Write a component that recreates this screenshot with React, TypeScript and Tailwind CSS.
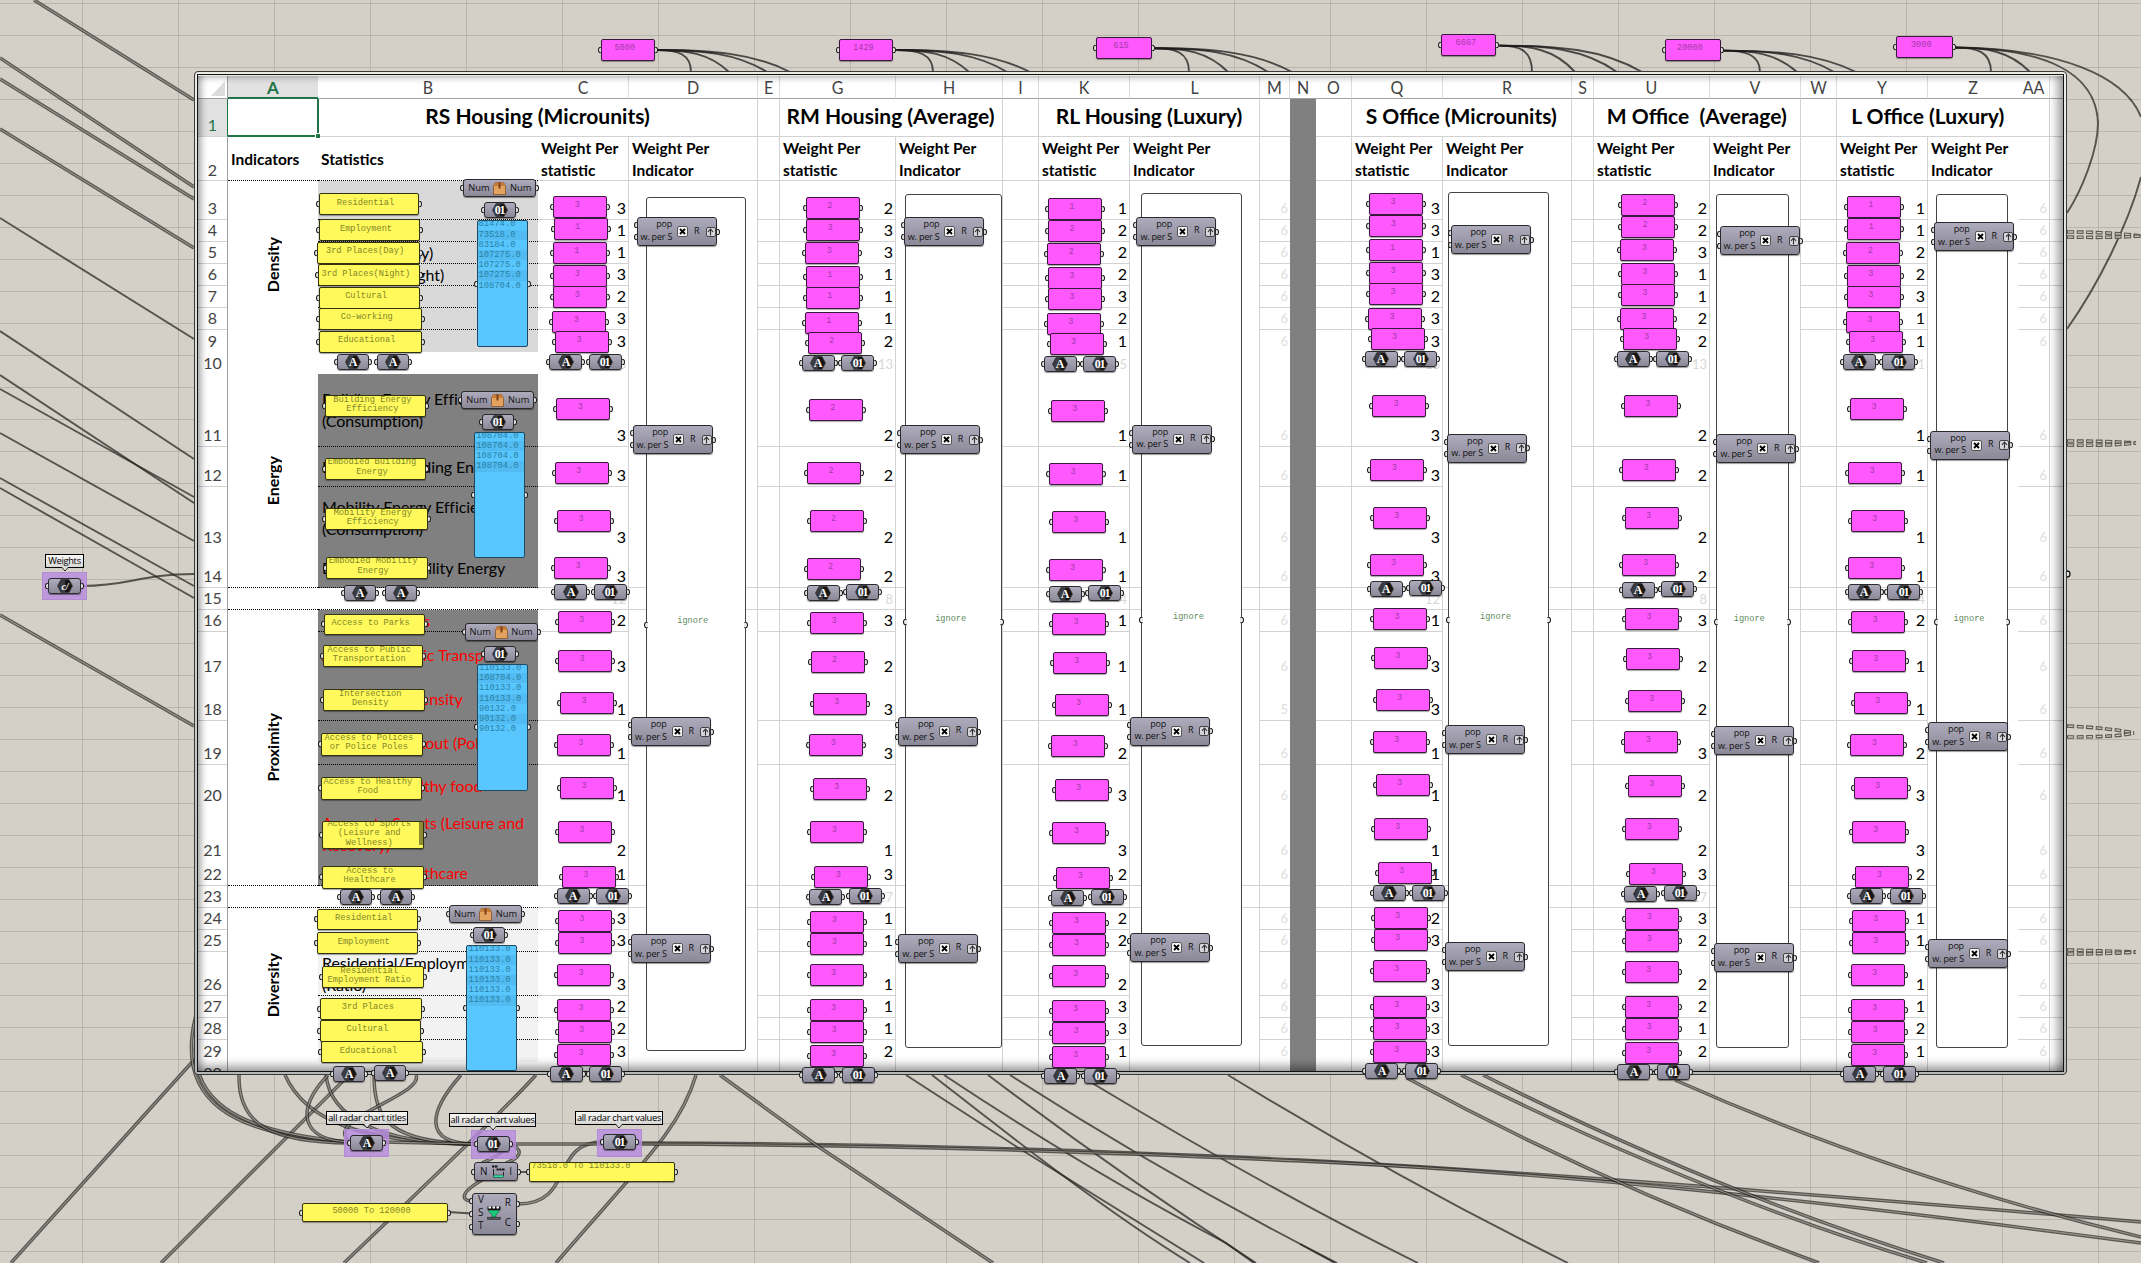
import React from "react";

type Pt = [number, number];

/* ---------- spreadsheet model ---------- */

type Line = "none" | "narrow" | "wide";
type Row = { n: number; h: string; line: Line };

const ROWS: Row[] = [
  { n: 3, h: "h-[39px]", line: "narrow" },
  { n: 4, h: "h-[22px]", line: "narrow" },
  { n: 5, h: "h-[22px]", line: "narrow" },
  { n: 6, h: "h-[22px]", line: "narrow" },
  { n: 7, h: "h-[22px]", line: "narrow" },
  { n: 8, h: "h-[22px]", line: "narrow" },
  { n: 9, h: "h-[22px]", line: "none" },
  { n: 10, h: "h-[22px]", line: "none" },
  { n: 11, h: "h-[73px]", line: "narrow" },
  { n: 12, h: "h-[40px]", line: "narrow" },
  { n: 13, h: "h-[61px]", line: "none" },
  { n: 14, h: "h-[40px]", line: "wide" },
  { n: 15, h: "h-[22px]", line: "wide" },
  { n: 16, h: "h-[22px]", line: "narrow" },
  { n: 17, h: "h-[45px]", line: "none" },
  { n: 18, h: "h-[44px]", line: "narrow" },
  { n: 19, h: "h-[44px]", line: "narrow" },
  { n: 20, h: "h-[41px]", line: "none" },
  { n: 21, h: "h-[55px]", line: "none" },
  { n: 22, h: "h-[25px]", line: "wide" },
  { n: 23, h: "h-[22px]", line: "wide" },
  { n: 24, h: "h-[22px]", line: "narrow" },
  { n: 25, h: "h-[22px]", line: "narrow" },
  { n: 26, h: "h-[44px]", line: "narrow" },
  { n: 27, h: "h-[22px]", line: "narrow" },
  { n: 28, h: "h-[22px]", line: "narrow" },
  { n: 29, h: "h-[22px]", line: "none" },
  { n: 30, h: "h-[10px]", line: "none" },
];

/* Values for sheet rows 3 to 30, one character per row; a dot is an empty cell. */
type Col = {
  k: string;
  w: string;
  vals?: string;
  sums?: Record<number, string>;
  wideOnly?: boolean;
  faint?: boolean;
  edge?: boolean;
  dark?: boolean;
};

const COLS: Col[] = [
  { k: "C", w: "w-[91px]", vals: "3113233.3333.2311121.333223.", sums: { 10: "16", 15: "12" }, edge: true },
  { k: "D", w: "w-[129px]", wideOnly: true, edge: true },
  { k: "E", w: "w-[22px]", edge: true },
  { k: "G", w: "w-[116px]", vals: "2331112.2222.3233213.111112.", sums: { 10: "13", 15: "8", 23: "17" }, edge: true },
  { k: "H", w: "w-[107px]", wideOnly: true, edge: true },
  { k: "I", w: "w-[36px]", edge: true },
  { k: "K", w: "w-[91px]", vals: "1222321.1111.1112332.222331.", sums: { 10: "15", 15: "4" }, edge: true },
  { k: "L", w: "w-[130px]", wideOnly: true, edge: true },
  { k: "M", w: "w-[30px]", vals: "6666666.6666.6656666.666666.", faint: true },
  { k: "N", w: "w-[26px]", dark: true },
  { k: "O", w: "w-[36px]", edge: true },
  { k: "Q", w: "w-[91px]", vals: "3313233.3333.1331111.233333.", sums: { 10: "16", 15: "12" }, edge: true },
  { k: "R", w: "w-[129px]", wideOnly: true, edge: true },
  { k: "S", w: "w-[22px]", edge: true },
  { k: "U", w: "w-[116px]", vals: "2231122.2222.3223223.322212.", sums: { 10: "13", 15: "8", 23: "17" }, edge: true },
  { k: "V", w: "w-[91px]", wideOnly: true, edge: true },
  { k: "W", w: "w-[36px]", edge: true },
  { k: "Y", w: "w-[91px]", vals: "1122311.1111.2112332.111121.", sums: { 10: "11", 15: "4" }, edge: true },
  { k: "Z", w: "w-[90px]", wideOnly: true },
  { k: "AA", w: "w-[32px]", vals: "6666666.6666.6666666.666666.", faint: true, edge: true },
  { k: "", w: "w-[13px]" },
];

const B_TEXT: Record<number, { t: string[]; red?: boolean }> = {
  5: { t: ["3rd Places (Day)"] },
  6: { t: ["3rd Places (Night)"] },
  11: { t: ["Building Energy Efficiency", "(Consumption)"] },
  12: { t: ["Embodied Building Energy"] },
  13: { t: ["Mobility Energy Efficiency", "(Consumption)"] },
  14: { t: ["Embodied Mobility Energy"] },
  16: { t: ["Access to Parks"], red: true },
  17: { t: ["Access to Public Transport"], red: true },
  18: { t: ["Intersection Density"], red: true },
  19: { t: ["Access to Lookout (Police)"], red: true },
  20: { t: ["Access to Healthy food"], red: true },
  21: { t: ["Access to Sports (Leisure and", "Recovery)"], red: true },
  22: { t: ["Access to Healthcare"], red: true },
  26: { t: ["Residential/Employment", "(Ratio)"] },
};

function bFill(n: number) {
  if (n <= 9) return "bg-[#d9d9d9]";
  if (n >= 11 && n <= 14) return "bg-[#808080]";
  if (n >= 16 && n <= 22) return "bg-[#808080]";
  if (n >= 24 && n <= 29) return "bg-[#f2f2f2]";
  return "bg-white";
}

const LINE = "border-[#d2d2d2]";

function HeadLetter({ w, t, edge }: { w: string; t: string; edge?: boolean }) {
  return (
    <div className={`${w} shrink-0 flex items-center justify-center pt-[2px] text-[16px] text-[#444] border-b border-[#a0a0a0] ${edge ? "border-r border-r-[#dcdcdc]" : ""}`}>
      <span className="scale-y-[1.08]">{t}</span>
    </div>
  );
}

function Title({ w, t, edge = true }: { w: string; t: string; edge?: boolean }) {
  return (
    <div className={`${w} shrink-0 flex items-center justify-center border-b ${edge ? "border-r" : ""} ${LINE} pb-[3px] text-[20.5px] font-bold text-black whitespace-pre`}>
      <span className="scale-x-[1.025]">{t}</span>
    </div>
  );
}

function Gap({ w, edge = true }: { w: string; edge?: boolean }) {
  return <div className={`${w} shrink-0 border-b ${edge ? "border-r" : ""} ${LINE}`} />;
}

function Sheet() {
  return (
    <div className="relative flex h-[996px] w-[1865px] flex-col overflow-hidden bg-white font-['Lato',sans-serif]">
      <div className="flex h-[23px] shrink-0">
        <div className="flex w-[30px] shrink-0 items-end justify-end border-b border-r border-[#a0a0a0] pb-[2px] pr-[2px]">
          <svg width="14" height="15" viewBox="0 0 14 15"><path d="M14 0V15H0Z" fill="#dcdcdc" /></svg>
        </div>
        <div className="flex w-[90px] shrink-0 items-center justify-center border-b-2 border-[#217346] bg-[#e1e1e1] pt-[2px] text-[17px] font-bold text-[#217346]">A</div>
        <HeadLetter w="w-[220px]" t="B" />
        {COLS.map((c) => (
          <HeadLetter key={c.k} w={c.w} t={c.k} edge={c.edge || c.k === "M"} />
        ))}
      </div>

      <div className="flex h-[38px] shrink-0">
        <div className="flex w-[30px] shrink-0 items-end justify-center border-b border-r border-b-[#d2d2d2] border-r-[#217346] bg-[#e1e1e1] pb-px text-[16px] leading-[20px] text-[#217346]">1</div>
        <div className="relative w-[91px] shrink-0 border-2 border-l-0 border-t-0 border-[#217346]">
          <div className="absolute -bottom-[3px] -right-[3px] size-[5px] border-l border-t border-white bg-[#217346]" />
        </div>
        <Title w="w-[439px]" t="RS Housing (Microunits)" />
        <Gap w="w-[22px]" />
        <Title w="w-[223px]" t="RM Housing (Average)" />
        <Gap w="w-[36px]" />
        <Title w="w-[221px]" t="RL Housing (Luxury)" />
        <Gap w="w-[30px]" edge={false} />
        <div className="w-[26px] shrink-0 bg-[#808080]" />
        <Gap w="w-[36px]" />
        <Title w="w-[220px]" t="S Office (Microunits)" />
        <Gap w="w-[22px]" />
        <Title w="w-[207px]" t="M Office  (Average)" />
        <Gap w="w-[36px]" />
        <Title w="w-[181px]" t="L Office (Luxury)" edge={false} />
        <Gap w="w-[32px]" />
        <Gap w="w-[13px]" edge={false} />
      </div>

      <div className="flex h-[44px] shrink-0 text-[15.5px] font-bold leading-[22px] text-black">
        <div className="flex w-[30px] shrink-0 items-end justify-center border-b border-r border-b-[#d2d2d2] border-r-[#a0a0a0] text-[16px] font-normal leading-[20px] text-[#444]">2</div>
        <div className="flex w-[90px] shrink-0 items-center border-b border-dotted border-black pl-[3px]">Indicators</div>
        <div className="flex w-[220px] shrink-0 items-center border-b border-dotted border-black pl-[3px]">Statistics</div>
        {COLS.map((c) =>
          c.dark ? (
            <div key={c.k} className={`${c.w} shrink-0 bg-[#808080]`} />
          ) : (
            <div key={c.k} className={`${c.w} shrink-0 border-b ${c.edge ? "border-r" : ""} ${LINE} whitespace-nowrap pl-[3px]`}>
              {c.vals && !c.faint && (<>Weight Per<br />statistic</>)}
              {c.wideOnly && (<>Weight Per<br />Indicator</>)}
            </div>
          ),
        )}
      </div>

      <div className="flex grow">
        <div className="flex w-[30px] shrink-0 flex-col border-r border-[#a0a0a0] text-[16px] leading-[22px] text-[#444]">
          {ROWS.map((r) => (
            <div key={r.n} className={`${r.h} flex shrink-0 justify-center ${r.n === 30 ? "items-start" : "items-end"} ${r.line === "none" ? "" : "border-b border-[#d2d2d2]"}`}>{r.n}</div>
          ))}
        </div>

        <div className="flex w-[90px] shrink-0 flex-col text-[16px] font-bold">
          {[
            { t: "Density", h: "h-[193px]", p: "pb-[26px]", l: "" },
            { t: "Energy", h: "h-[214px]", p: "pb-0", l: "border-b border-dotted border-black" },
            { t: "", h: "h-[22px]", p: "", l: "border-b border-dotted border-black" },
            { t: "Proximity", h: "h-[276px]", p: "", l: "border-b border-dotted border-black" },
            { t: "", h: "h-[22px]", p: "", l: "border-b border-dotted border-black" },
            { t: "Diversity", h: "h-[154px]", p: "", l: "" },
          ].map((s, i) => (
            <div key={i} className={`${s.h} ${s.p} ${s.l} flex shrink-0 items-center justify-center`}>
              <span className="rotate-180 [writing-mode:vertical-rl]">{s.t}</span>
            </div>
          ))}
        </div>

        <div className="flex w-[220px] shrink-0 flex-col text-[16px] leading-[22px] tracking-[-0.07px]">
          {ROWS.map((r) => {
            const b = B_TEXT[r.n];
            return (
              <div key={r.n} className={`${r.h} ${bFill(r.n)} ${r.line === "none" ? "" : "border-b border-dotted border-black"} flex shrink-0 flex-col justify-center overflow-hidden whitespace-nowrap pl-[4px] ${b && b.red ? "text-[#ff0000]" : "text-black"}`}>
                {b && b.t.map((t) => <div key={t}>{t}</div>)}
              </div>
            );
          })}
        </div>

        {COLS.map((c) => (
          <div key={c.k} className={`${c.w} flex shrink-0 flex-col ${c.dark ? "bg-[#808080]" : ""} ${c.edge ? "border-r " + LINE : ""}`}>
            {!c.dark &&
              ROWS.map((r, i) => {
                const v = c.vals ? c.vals[i] : ".";
                const sum = c.sums && c.sums[r.n];
                const lined = r.line === "wide" || (r.line === "narrow" && !c.wideOnly);
                return (
                  <div key={r.n} className={`${r.h} flex shrink-0 items-end justify-end pr-[2px] leading-[22px] ${lined ? "border-b " + LINE : ""} ${c.faint ? "text-[13px] text-[#dedede]" : "text-[16px] text-black"}`}>
                    {v !== "." && v}
                    {sum && <span className="text-[13px] leading-[19px] text-[#d8d8d8]">{sum}</span>}
                  </div>
                );
              })}
          </div>
        ))}
      </div>

      <div className="pointer-events-none absolute inset-0 shadow-[inset_0_-14px_10px_-8px_rgba(0,0,0,0.4),inset_-12px_0_8px_-6px_rgba(0,0,0,0.35),inset_8px_0_7px_-5px_rgba(0,0,0,0.35),inset_0_6px_6px_-4px_rgba(0,0,0,0.25)]" />
    </div>
  );
}

/* ---------- canvas nodes ---------- */

function Port({ side, y }: { side: "l" | "r"; y?: number }) {
  return (
    <span
      className={`absolute h-[7px] w-[4px] -translate-y-1/2 border-[1.3px] border-[#151515] bg-[#e8e8e8] ${
        side === "l" ? "-left-[3px] rounded-l-full border-r-0" : "-right-[3px] rounded-r-full border-l-0"
      }`}
      style={{ top: y === undefined ? "50%" : y }}
    />
  );
}

const MONO = "font-['Liberation_Mono',monospace]";

function Pink({ x, y, t, w = 54 }: { x: number; y: number; t: string; w?: number }) {
  return (
    <div className="absolute h-[22px]" style={{ left: x, top: y, width: w }}>
      <Port side="l" />
      <Port side="r" />
      <div className={`relative h-full rounded-[2px] border border-[#3a1a3a] bg-[#ff58ff] pr-[6px] text-center text-[8.6px] leading-[17px] text-[#a23aa8] shadow-[0_1px_1px_rgba(0,0,0,0.35)] ${MONO}`}>{t}</div>
    </div>
  );
}

function Yellow({ x, y, w, h, t, left }: { x: number; y: number; w: number; h: number; t: string[]; left?: boolean }) {
  return (
    <div className="absolute" style={{ left: x, top: y, width: w, height: h }}>
      <Port side="l" />
      <Port side="r" />
      <div className={`relative flex h-full flex-col overflow-hidden whitespace-nowrap rounded-[2px] border border-[#33330f] bg-[#fff95b] text-[8.7px] leading-[9.5px] text-[#7f8728] shadow-[0_1px_1px_rgba(0,0,0,0.35)] ${MONO} ${left ? "items-start justify-start pl-px" : "items-center justify-center pb-[2px] pr-[7px]"}`}>
        {t.map((s) => <div key={s} className={left ? "-mt-px" : ""}>{s}</div>)}
      </div>
      {t.length === 3 && <div className="absolute right-px top-px h-[23px] w-[4px] bg-[#8f8b33]" />}
    </div>
  );
}

function Blue({ x, y, h, t }: { x: number; y: number; h: number; t: string[] }) {
  return (
    <div className="absolute w-[51px]" style={{ left: x, top: y, height: h }}>
      <Port side="l" />
      <Port side="r" />
      <div className={`relative h-full overflow-hidden rounded-[2px] border border-[#1f4a60] bg-[#59c7ff] text-[8.8px] leading-[10.2px] text-[#2a82a5] ${MONO}`}>
        <div className="-mt-[2px]">
          {t.map((s, i) => <div key={i} className={`pl-px ${i % 2 ? "bg-[#52bcf2]" : ""}`}>{s}</div>)}
        </div>
      </div>
    </div>
  );
}

const SHELL = "relative h-full rounded-[3px] border border-[#2a2a2e] bg-gradient-to-b from-[#aeacbc] to-[#8b8998] shadow-[0_1px_1px_rgba(0,0,0,0.4)]";

function Hex({ x, y, w = 32, t }: { x: number; y: number; w?: number; t: string }) {
  return (
    <div className="absolute h-[16px]" style={{ left: x, top: y, width: w }}>
      <Port side="l" />
      <Port side="r" />
      <div className={`${SHELL} flex items-center justify-center`}>
        <svg width="16" height="14" viewBox="0 0 16 14">
          <path d="M4 0.5H12L15.5 7L12 13.5H4L0.5 7Z" fill="#161616" stroke="#3c3c40" strokeWidth="0.8" />
          <path d="M4 1H8V13H4L1 7Z" fill="#3b3b3f" />
          <text x={t === "01" ? 7.6 : 8} y="11" textAnchor="middle" fontFamily="Liberation Serif, serif" fontWeight="700" fontStyle={t === "c/" ? "italic" : "normal"} fontSize={t === "c/" ? 10 : 12} letterSpacing={t === "01" ? -1.2 : 0} fill="#fff">{t}</text>
        </svg>
      </div>
    </div>
  );
}

const UI = "font-['Open_Sans',sans-serif]";

function Num({ x, y }: { x: number; y: number }) {
  return (
    <div className="absolute h-[18px] w-[73px]" style={{ left: x, top: y }}>
      <Port side="l" />
      <Port side="r" />
      <div className={`${SHELL} flex items-center justify-between px-[4px] text-[9.3px] leading-none text-[#111] ${UI}`}>
        <span className="pb-px">Num</span>
        <svg width="13" height="13" viewBox="0 0 13 13">
          <path d="M2.5 0.5H10.5L12.5 4V12.5H0.5V4Z" fill="#e3a25e" stroke="#7a4a1c" strokeWidth="0.7" />
          <path d="M0.5 4L2.5 0.5H10.5L12.5 4Z" fill="#c67f3b" />
          <path d="M5.5 0.5H7.5V6.5H5.5Z" fill="#7d3f1b" />
        </svg>
        <span className="pb-px">Num</span>
      </div>
    </div>
  );
}

function Pop({ x, y }: { x: number; y: number }) {
  return (
    <div className={`absolute h-[29px] w-[80px] ${UI}`} style={{ left: x, top: y }}>
      <Port side="l" y={8} />
      <Port side="l" y={20} />
      <Port side="r" />
      <div className={`${SHELL} flex items-center text-[9px] leading-[12.5px] text-[#111]`}>
        <div className="w-[35px] whitespace-nowrap pb-[2px] text-right tracking-[-0.2px]">pop<br />w. per S</div>
        <div className="ml-[5px] flex size-[11px] items-center justify-center rounded-[2px] border border-[#555] bg-[#f4f4f4]">
          <svg width="7" height="7" viewBox="0 0 7 7"><path d="M1 1L6 6M6 1L1 6" stroke="#000" strokeWidth="1.8" /></svg>
        </div>
        <div className="ml-[6px] pb-[2px]">R</div>
        <div className="ml-[6px] flex h-[10px] w-[10px] items-center justify-center rounded-[2px] border border-[#444] bg-[#d6d6dc]">
          <svg width="7" height="8" viewBox="0 0 7 8"><path d="M3.5 7.5V1M1 3.8L3.5 1L6 3.8" fill="none" stroke="#333" strokeWidth="1.1" /></svg>
        </div>
      </div>
    </div>
  );
}

function Ignore({ x, y, r, b, ty }: { x: number; y: number; r: number; b: number; ty: number }) {
  return (
    <div className="absolute rounded-[3px] border-[1.5px] border-[#444] bg-white" style={{ left: x, top: y, width: r - x, height: b - y }}>
      <Port side="l" y={ty - y + 1} />
      <Port side="r" y={ty - y + 1} />
      <div className={`absolute inset-x-0 -translate-y-1/2 pr-[6px] text-center text-[8.6px] leading-[10px] text-[#5d8a5d] ${MONO}`} style={{ top: ty - y - 2.5 }}>ignore</div>
    </div>
  );
}

function Group({ x, y, w, h, t, node, lx, ly, lw }: { x: number; y: number; w: number; h: number; t: string; node: string; lx: number; ly: number; lw: number }) {
  return (
    <>
      <div className="absolute border border-[#b58bd8] bg-[#b78ade]/80" style={{ left: x, top: y, width: w, height: h }} />
      <div className={`absolute flex h-[14px] items-center justify-center whitespace-nowrap border-[1.5px] border-black bg-gradient-to-b from-white/85 to-[#d8d8d8]/85 text-[9.3px] leading-none text-black ${UI}`} style={{ left: lx, top: ly, width: lw }}>
        <span className="pb-px tracking-[-0.3px]">{t}</span>
        <svg className="absolute left-1/2 top-full -translate-x-1/2" width="8" height="5" viewBox="0 0 8 5"><path d="M0.5 0L4 4L7.5 0" fill="#e2e2e2" stroke="#000" strokeWidth="0.8" /></svg>
      </div>
      <Hex x={x + (w - 33) / 2} y={y + 5.5} w={33} t={node} />
    </>
  );
}

/* ---------- node data ---------- */

const PINK_POS: Pt[] = [
  [553.3, 196.3], [553.7, 218.3], [552.8, 241.7], [553.3, 265.3], [553.3, 286.3], [552.3, 311], [555, 331],
  [556.4, 398], [554.6, 461.7], [557, 509.7], [554, 557],
  [557.5, 611], [558.2, 650.3], [560, 692.2], [556.8, 733.7], [560, 777.3], [557.9, 820.8], [561.8, 865.5],
  [557.9, 910.3], [557.9, 932.3], [557, 963.5], [557, 998.7], [557.5, 1020.7], [557, 1044.3],
];
const HEX_POS: { p: Pt; q: Pt }[] = [
  { p: [549, 354], q: [588.6, 354] },
  { p: [554, 584.3], q: [593.6, 583.5] },
  { p: [556.8, 888.3], q: [596, 887.8] },
  { p: [549.6, 1066.2], q: [589.3, 1066.2] },
];
const PANELS = [
  { dx: 0, dy: 0, v: "311333333333333333333333" },
  { dx: 252.5, dy: 0.6, v: "233111222223233333333333" },
  { dx: 494.5, dy: 1.5, v: "122333333333333333333333" },
  { dx: 815.7, dy: -3.2, v: "331333333333333333333333" },
  { dx: 1067.5, dy: -2.7, v: "223333333333333333333333" },
  { dx: 1293.6, dy: 0, v: "112333333333333333333333" },
];

const POPS: Pt[] = [
  [636.5, 217.3], [632.5, 425.3], [631, 717.3], [631, 934.3],
  [903.8, 217.3], [900.3, 425.3], [898.3, 717], [898.3, 934],
  [1136.4, 217], [1132.4, 424.7], [1130.4, 716.6], [1130.4, 933.3],
  [1450.7, 225.3], [1447.3, 433.6], [1445, 725.3], [1445, 942.3],
  [1719.5, 226.3], [1716.4, 434.3], [1714, 726.3], [1714, 943],
  [1934, 222.3], [1930.4, 430.5], [1928.3, 722.3], [1928.3, 939.3],
];

const IGNORES = [
  { x: 645.5, y: 197, r: 746, b: 1051, ty: 622.5 },
  { x: 905.3, y: 194.3, r: 1002, b: 1048.3, ty: 620.3 },
  { x: 1141, y: 192.7, r: 1242, b: 1046.5, ty: 618.5 },
  { x: 1448, y: 192, r: 1549, b: 1046, ty: 618 },
  { x: 1715.5, y: 194, r: 1789, b: 1047.7, ty: 620 },
  { x: 1936, y: 194.3, r: 2008, b: 1048.5, ty: 620.3 },
];

const YELLOWS: { x: number; y: number; w: number; h: number; t: string[]; left?: boolean }[] = [
  { x: 319, y: 193.3, w: 100, h: 22, t: ["Residential"] },
  { x: 319, y: 219.3, w: 101, h: 22, t: ["Employment"] },
  { x: 317.3, y: 242, w: 102.5, h: 22, t: ["3rd Places(Day)"] },
  { x: 318.3, y: 264.3, w: 102, h: 22, t: ["3rd Places(Night)"] },
  { x: 319, y: 286.7, w: 101, h: 22, t: ["Cultural"] },
  { x: 319, y: 307.7, w: 102.5, h: 22.5, t: ["Co-working"] },
  { x: 319, y: 330.7, w: 102.5, h: 22, t: ["Educational"] },
  { x: 325.4, y: 395.3, w: 101, h: 22, t: ["Building Energy", "Efficiency"] },
  { x: 325, y: 457.5, w: 101, h: 22, t: ["Embodied Building", "Energy"] },
  { x: 325, y: 508, w: 102.5, h: 22, t: ["Mobility Energy", "Efficiency"] },
  { x: 325.6, y: 556.7, w: 102, h: 22.3, t: ["Embodied Mobility", "Energy"] },
  { x: 323.6, y: 613.7, w: 101, h: 21.3, t: ["Access to Parks"] },
  { x: 322.5, y: 645, w: 100.5, h: 22, t: ["Access to Public", "Transportation"] },
  { x: 322.5, y: 689, w: 102.5, h: 22.3, t: ["Intersection", "Density"] },
  { x: 321.4, y: 733.3, w: 102, h: 22.3, t: ["Access to Polices", "or Police Poles"] },
  { x: 320.7, y: 777.3, w: 101.3, h: 22.3, t: ["Access to Healthy", "Food"] },
  { x: 321.8, y: 821.3, w: 102, h: 27.7, t: ["Access to Sports", "(Leisure and", "Wellness)"] },
  { x: 322, y: 866.3, w: 102.3, h: 22.3, t: ["Access to", "Healthcare"] },
  { x: 317, y: 908.7, w: 100.5, h: 21.3, t: ["Residential"] },
  { x: 317, y: 932.3, w: 100.5, h: 22, t: ["Employment"] },
  { x: 321.8, y: 966.3, w: 102, h: 22, t: ["Residential", "Employment Ratio"] },
  { x: 320.4, y: 997.7, w: 101.8, h: 22, t: ["3rd Places"] },
  { x: 320.4, y: 1020, w: 101, h: 21.7, t: ["Cultural"] },
  { x: 320.7, y: 1041.3, w: 102.5, h: 22, t: ["Educational"] },
  { x: 529.4, y: 1162.3, w: 146, h: 19.3, t: ["73518.0 To 110133.0"], left: true },
  { x: 302, y: 1202.8, w: 146, h: 19.5, t: ["50000 To 120000"] },
];

const BLUES = [
  { x: 476.5, y: 220.3, h: 126.7, t: ["81474.0", "73518.0", "83184.0", "107275.0", "107275.0", "107275.0", "108704.0"] },
  { x: 474.3, y: 431.7, h: 126.3, t: ["108704.0", "108704.0", "108704.0", "108704.0"] },
  { x: 477, y: 664, h: 126.7, t: ["110133.0", "108704.0", "110133.0", "110133.0", "90132.0", "90132.0", "90132.0"] },
  { x: 466.4, y: 945.3, h: 126, t: ["110133.0", "110133.0", "110133.0", "110133.0", "110133.0", "110133.0"] },
];

const TOPS = [
  { x: 601, y: 38.7, w: 53.5, t: "5000", ends: [691, 729, 767, 790] },
  { x: 839.4, y: 38.7, w: 54, t: "1429", ends: [933, 969, 1007, 1030] },
  { x: 1096, y: 37, w: 56, t: "615", ends: [1189, 1228, 1268, 1292] },
  { x: 1441.4, y: 34.3, w: 55, t: "6667", ends: [1532, 1575, 1617, 1642] },
  { x: 1665.2, y: 39.3, w: 55.5, t: "20000", ends: [1760, 1797, 1834, 1856] },
  { x: 1896, y: 36.3, w: 56.5, t: "3000", ends: [1991, 2030] },
];

const SINGLE = [
  "M0 218L194 339", "M0 331L194 459", "M0 375L194 503", "M0 389L194 497", "M0 433L194 541", "M0 478L194 586", "M0 488L194 598",
  "M82 586C130 586 140 574 194 574",
  "M906 1075L1017 1147L1204 1263", "M932 1075C990 1120 1100 1208 1190 1263", "M944 1075Q1090 1172 1226 1243L1254 1263",
  "M988 1075Q1120 1175 1256 1263", "M1010 1075Q1170 1178 1337 1263", "M1092 1083Q1270 1190 1418 1263", "M1228 1075Q1400 1180 1568 1263",
  "M1300 1244L1335 1263",
  "M1953 47.5C2040 48 2096 70 2098 123C2098 150 2082 190 2067 213",
  "M1953 47.5C2060 48 2125 76 2141 117", "M2141 177C2128 225 2098 285 2067 329",
  "M448 1212L472 1213.5", "M518 1172H530",
];

const DOUBLE = [
  "M34 0L194 100", "M0 58L194 187", "M0 79L194 199", "M0 129L194 248", "M0 615L194 726",
  "M194 1060L11 1263", "M344 1080L161 1263", "M536 1075C490 1125 430 1180 344 1263", "M696 1075C680 1130 640 1165 556 1263",
  "M196 1015C174 1100 230 1136 350 1142", "M198 1025C182 1100 235 1132 350 1142",
  "M239 1075C238 1125 270 1142 350 1143", "M285 1075C305 1120 360 1143 476 1144", "M326 1075C330 1115 375 1144 476 1144",
  "M328 1075C295 1110 300 1140 350 1142", "M374 1075C374 1120 390 1143 476 1144",
  "M416 1075C425 1095 320 1120 350 1142", "M461 1075C430 1110 420 1144 476 1144", "M383 1142L476 1144",
  "M510 1144C525 1150 520 1158 506 1163", "M508 1146Q500 1156 482 1163", "M482 1180C455 1196 465 1201 472 1201",
  "M518 1204C575 1204 550 1142 603 1142", "M510 1144H603",
  "M636 1143C900 1143 1100 1151 1300 1160C1500 1170 1800 1193 2141 1222",
  "M636 1144C900 1145 1100 1152 1300 1161C1550 1172 1800 1198 2141 1243",
  "M720 1075L819 1147L993 1263",
  "M1407 1078Q1600 1183 1819 1263", "M1461 1075Q1700 1194 1927 1263", "M1483 1075Q1720 1194 1944 1263", "M1675 1080Q1890 1176 2141 1237",
];

const CHAINS = ["M2067 232Q2110 232 2141 236", "M2067 237Q2110 238 2141 236", "M2067 441Q2110 441 2136 443", "M2067 445Q2110 446 2136 443", "M2067 726Q2110 728 2134 733", "M2067 737Q2120 737 2134 733", "M2067 950Q2110 951 2136 952", "M2067 954Q2110 954 2136 952"];

function Wires() {
  return (
    <svg className="absolute inset-0" width="2141" height="1263" viewBox="0 0 2141 1263" fill="none">
      {Array.from({ length: 23 }, (_, i) => <path key={"v" + i} d={`M${82.5 + i * 96} 0V1263`} stroke="#b9b5ac" />)}
      {Array.from({ length: 40 }, (_, i) => <path key={"h" + i} d={`M0 ${3.5 + i * 32}H2141`} stroke="#b9b5ac" />)}
      {SINGLE.map((d) => <path key={d} d={d} stroke="#23221f" strokeOpacity="0.72" strokeWidth="1.9" />)}
      {DOUBLE.map((d) => (
        <g key={d}>
          <path d={d} stroke="#23221f" strokeOpacity="0.7" strokeWidth="3.5" />
          <path d={d} stroke="#a5a199" strokeOpacity="0.8" strokeWidth="1.1" />
        </g>
      ))}
      {TOPS.map((n) =>
        n.ends.map((e, i) => {
          const sx = n.x + n.w + 3;
          const sy = n.y + 11.3;
          const dx = e - sx;
          const c2 = i === 0 ? `${e} ${sy + 4}` : `${sx + dx * 0.72} ${sy + 3}`;
          return <path key={e} d={`M${sx} ${sy}C${sx + dx * (i === 0 ? 0.6 : 0.4)} ${sy} ${c2} ${e} 72`} stroke="#1c1b19" strokeOpacity="0.75" strokeWidth="1.9" />;
        }),
      )}
      {CHAINS.map((d) => (
        <g key={d}>
          <path d={d} stroke="#5b5852" strokeWidth="3.6" strokeDasharray="7 2.5" />
          <path d={d} stroke="#cfcbc2" strokeWidth="1.3" strokeDasharray="5 4.5" strokeDashoffset="-1" />
        </g>
      ))}
      <circle cx="2067" cy="574" r="3" fill="#e8e8e8" stroke="#151515" strokeWidth="1.3" />
    </svg>
  );
}

export default function App() {
  return (
    <div className="relative h-[1263px] w-[2141px] overflow-hidden bg-[#d4d0c8] pl-[194px] pt-[71px]">
      <Wires />
      <div className="relative h-[1004px] w-[1873px] rounded-[4px] border border-[#3a3a3a] bg-gradient-to-b from-[#ecece6] to-[#b4b8b8] p-[2px]">
        <div className="h-full w-full overflow-hidden border border-[#111] pt-[1px]">
          <Sheet />
        </div>
      </div>

      {IGNORES.map((g) => <Ignore key={g.x} {...g} />)}
      {POPS.map(([x, y]) => <Pop key={`${x}-${y}`} x={x} y={y} />)}
      {BLUES.map((b) => <Blue key={b.y} {...b} />)}
      {YELLOWS.map((n) => <Yellow key={n.y} {...n} />)}

      {PANELS.map((p) =>
        PINK_POS.map(([x, y], i) => <Pink key={`${p.dx}-${i}`} x={x + p.dx} y={y + p.dy} t={p.v[i]} />),
      )}
      {PANELS.map((p) =>
        HEX_POS.map((h, i) => (
          <React.Fragment key={`${p.dx}-${i}`}>
            <Hex x={h.p[0] + p.dx} y={h.p[1] + p.dy} w={33} t="A" />
            <Hex x={h.q[0] + p.dx} y={h.q[1] + p.dy} w={33} t="01" />
          </React.Fragment>
        )),
      )}
      {TOPS.map((n) => <Pink key={n.t} x={n.x} y={n.y} w={n.w} t={n.t} />)}

      <Num x={463.3} y={179.3} />
      <Num x={461.3} y={391} />
      <Num x={464.6} y={623.3} />
      <Num x={449} y={905.4} />
      <Hex x={484} y={202.3} t="01" />
      <Hex x={481.6} y={414} t="01" />
      <Hex x={484.3} y={646.3} t="01" />
      <Hex x={473.3} y={927.3} t="01" />

      <Hex x={336.6} y={353.5} t="A" />
      <Hex x={376.6} y={353.5} t="A" />
      <Hex x={344.3} y={584.7} t="A" />
      <Hex x={384.6} y={584.7} t="A" />
      <Hex x={340} y={889} t="A" />
      <Hex x={380.2} y={889} t="A" />
      <Hex x={333.3} y={1066} t="A" />
      <Hex x={373.6} y={1065.3} t="A" />

      <Group x={42} y={572} w={45} h={28} t="Weights" node="c/" lx={45} ly={554} lw={39} />
      <Group x={344} y={1129} w={45} h={28} t="all radar chart titles" node="A" lx={326} ly={1111} lw={82} />
      <Group x={470.5} y={1130.3} w={45} h={28.5} t="all radar chart values" node="01" lx={449} ly={1113} lw={87} />
      <Group x={597} y={1128.7} w={45} h={28.5} t="all radar chart values" node="01" lx={575} ly={1111} lw={88} />

      <div className={`absolute left-[474px] top-[1162px] h-[19px] w-[44px] ${UI}`}>
        <Port side="l" />
        <Port side="r" />
        <div className={`${SHELL} flex items-center justify-between px-[5px] text-[10px] leading-none text-[#111]`}>
          <span className="pb-px">N</span>
          <svg width="15" height="15" viewBox="0 0 15 15" fill="none">
            <path d="M1 2.5H7M5.5 5.5H14" stroke="#111" strokeWidth="2" strokeDasharray="2.2 0.5" />
            <path d="M2.5 5V12M12.5 8V12" stroke="#222" />
            <rect x="2.5" y="11" width="10" height="2.5" fill="#2fe0a0" stroke="#222" strokeWidth="0.5" />
          </svg>
          <span className="pb-px">I</span>
        </div>
      </div>

      <div className={`absolute left-[472px] top-[1193px] h-[41.5px] w-[45px] ${UI}`}>
        <Port side="l" y={8} />
        <Port side="l" y={21} />
        <Port side="l" y={34} />
        <Port side="r" y={11} />
        <Port side="r" y={31} />
        <div className={`${SHELL} flex items-center justify-between px-[5px] pb-[2px] text-[10px] text-[#111]`}>
          <div className="leading-[13px]">V<br />S<br />T</div>
          <svg width="14" height="14" viewBox="0 0 14 14">
            <rect x="0.5" y="0.5" width="13" height="3.5" fill="#111" />
            <path d="M1.5 1.5H4M5.5 1.5H8M9.5 1.5H12" stroke="#fff" strokeWidth="1.8" />
            <path d="M1 4.5H13L9 9V11H5V9Z" fill="#16c878" stroke="#0c5c3a" strokeWidth="0.6" />
            <rect x="0.5" y="11.2" width="13" height="2.4" fill="#55555c" stroke="#222" strokeWidth="0.5" />
          </svg>
          <div className="leading-[19.5px]">R<br />C</div>
        </div>
      </div>
    </div>
  );
}
